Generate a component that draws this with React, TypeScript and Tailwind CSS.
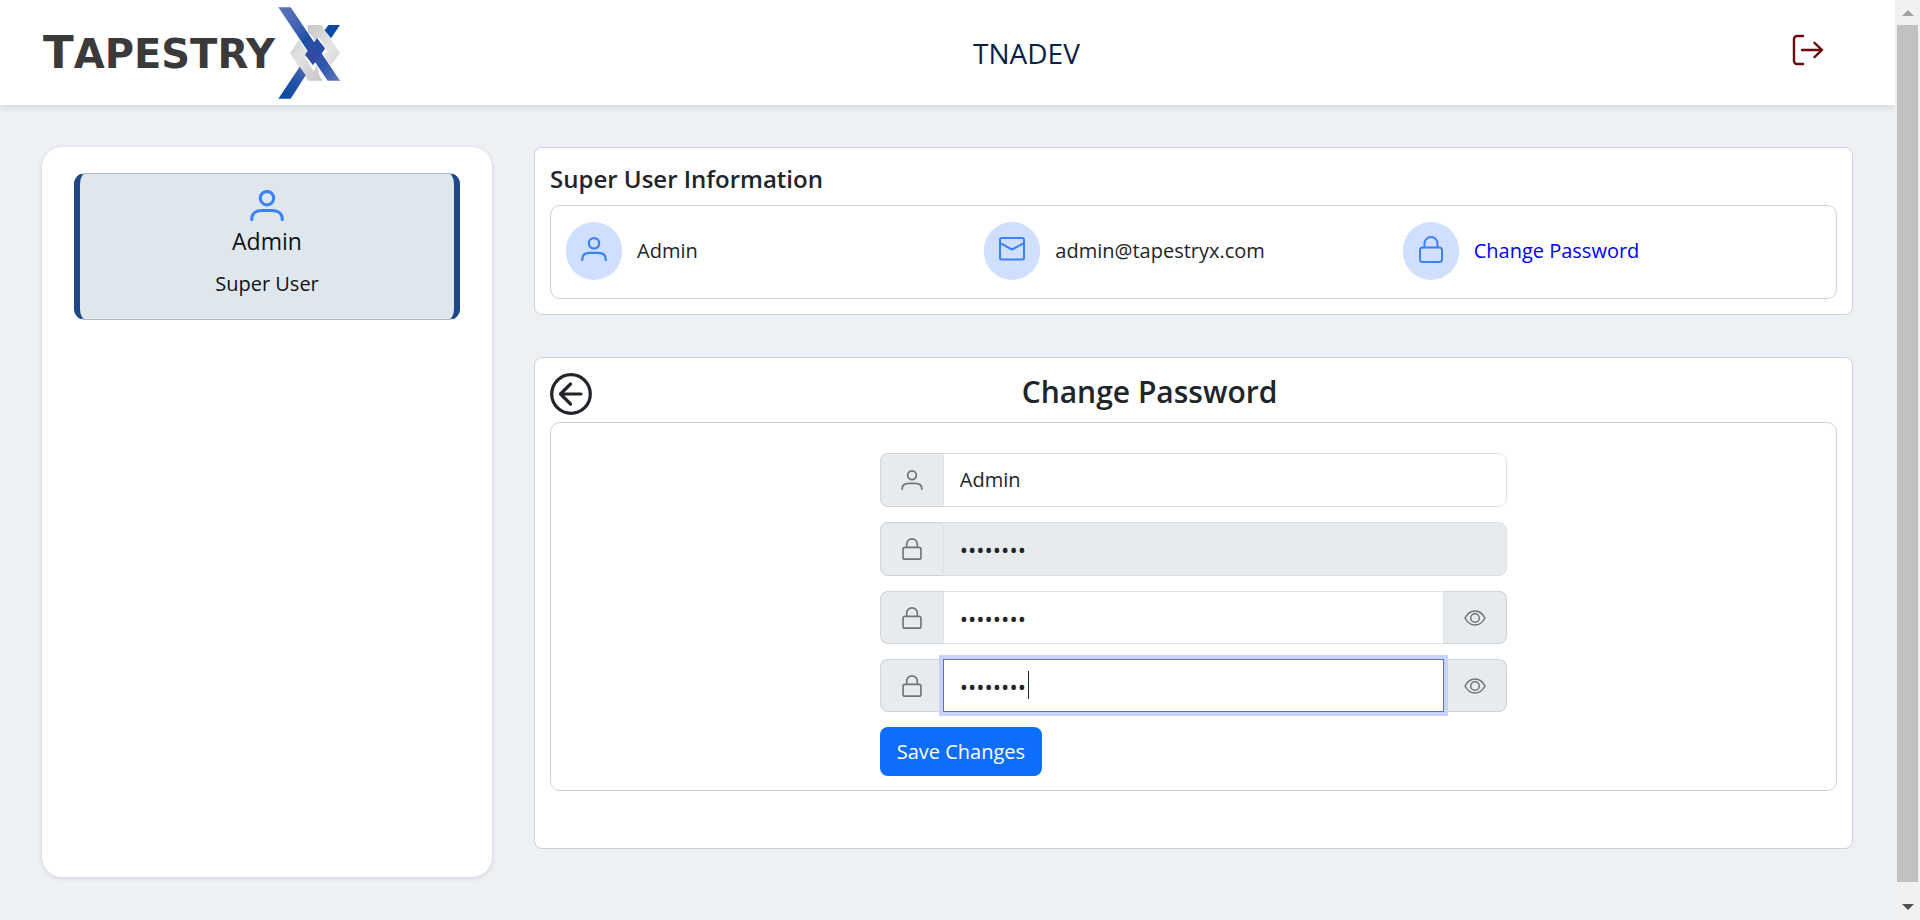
import { useState } from "react";
import type { ReactNode } from "react";

type IconProps = { className: string; weight: number };

function UserIcon({ className, weight }: IconProps) {
  return (
    <svg viewBox="0 0 26 24" fill="none" stroke="currentColor" strokeWidth={weight} strokeLinecap="round" className={className} aria-hidden="true">
      <circle cx="13" cy="6.3" r="5.2" />
      <path d="M1.2 23v-.6C1.2 17.6 5 15.9 9.2 15.9h7.6c4.2 0 8 1.7 8 6.5v.6" />
    </svg>
  );
}

function MailIcon({ className, weight }: IconProps) {
  return (
    <svg viewBox="0 0 26 24" fill="none" stroke="currentColor" strokeWidth={weight} strokeLinejoin="round" className={className} aria-hidden="true">
      <rect x="1" y="1" width="24" height="21.5" rx="1.5" />
      <path d="M1.2 6.2 13 12.5 24.8 6.2" />
    </svg>
  );
}

function LockIcon({ className, weight }: IconProps) {
  return (
    <svg viewBox="0 0 24 27" fill="none" stroke="currentColor" strokeWidth={weight} className={className} aria-hidden="true">
      <rect x="1" y="11.5" width="22" height="14.5" rx="2.5" />
      <path d="M5.5 11.5V7.5a6.5 6.5 0 0 1 13 0v4" />
    </svg>
  );
}

function EyeIcon({ className, weight }: IconProps) {
  return (
    <svg viewBox="0 0 22 16" fill="none" stroke="currentColor" strokeWidth={weight} className={className} aria-hidden="true">
      <path d="M1 8C3.5 3.2 7 1 11 1s7.500 2.200 10 7c-2.500 4.800-6 7-10 7S3.500 12.800 1 8Z" />
      <circle cx="11" cy="8" r="4.3" />
    </svg>
  );
}

function Logo() {
  return (
    <a href="#" aria-label="TapestryX" className="flex h-[105px] items-center text-[#3a3a3a] no-underline">
      <span className="font-['DejaVu_Sans',sans-serif] text-[40px] leading-none font-bold">
        <span className="text-[45px]">T</span>APESTRY
      </span>
      <svg viewBox="0 0 204 294" className="h-[98px] w-[68px] shrink-0" aria-hidden="true">
        <defs>
          <linearGradient id="strip" x1="0" y1="0" x2="1" y2="1">
            <stop offset="0" stopColor="#5b74b8" />
            <stop offset=".25" stopColor="#4a66b4" />
            <stop offset=".45" stopColor="#1a4fa6" />
            <stop offset=".6" stopColor="#3b4fa6" />
            <stop offset=".75" stopColor="#2a55ae" />
            <stop offset="1" stopColor="#6078ba" />
          </linearGradient>
          <linearGradient id="tail" x1="1" y1="0" x2="0" y2="1">
            <stop offset="0" stopColor="#5068b4" />
            <stop offset=".5" stopColor="#1e50a6" />
            <stop offset="1" stopColor="#0a4aa2" />
          </linearGradient>
          <linearGradient id="silverLeft" x1="0" y1="0" x2="1" y2="1">
            <stop offset="0" stopColor="#c9cbcc" />
            <stop offset=".35" stopColor="#e2e4e4" />
            <stop offset="1" stopColor="#c3c5c6" />
          </linearGradient>
          <linearGradient id="silverRight" x1="0" y1="0" x2="1" y2="1">
            <stop offset="0" stopColor="#c3c5c6" />
            <stop offset=".65" stopColor="#e4e6e7" />
            <stop offset="1" stopColor="#d2d4d5" />
          </linearGradient>
        </defs>
        <path d="M72 108 45 148 99 230h44l-9-14-8-32-10 18-26-42 14-8Z" fill="url(#silverLeft)" />
        <path d="M98 63h42l55 84-28 38-22-34 14-8-26-42-12 14-10-20-12-10Z" fill="url(#silverRight)" />
        <path d="M10 10h37l148 220h-37Z" fill="url(#strip)" />
        <path d="M90 152 126 103 150 133 114 184Z" fill="#3149a1" />
        <path d="m127 105 22 30-12 17-22-30Z" fill="#244fa8" />
        <path d="M160 63h35l-27 40-19-24Z" fill="#0b4aa3" />
        <path d="m74 188 18 26-45 70H10Z" fill="url(#tail)" />
      </svg>
    </a>
  );
}

function InfoItem({ icon, children }: { icon: ReactNode; children: ReactNode }) {
  return (
    <div className="flex items-center gap-[15px]">
      <span className="flex h-[58px] w-14 shrink-0 items-center justify-center rounded-full bg-[#d0dfff] pb-1 text-[#3b82f6]">
        {icon}
      </span>
      {children}
    </div>
  );
}

const addon = "flex w-[63px] shrink-0 items-center justify-center border border-[#ced4da] bg-[#e7ebee] text-[#6c757d]";
const field = "min-w-0 flex-1 border px-4 text-[#212529] outline-none";

function PasswordRow({ id, label, active }: { id: string; label: string; active?: boolean }) {
  const [value, setValue] = useState("password");
  const [shown, setShown] = useState(false);
  return (
    <div className="flex h-[53px]">
      <label htmlFor={id} aria-label={label} className={`${addon} rounded-l-lg border-r-0`}>
        <LockIcon weight={2} className="h-[22px] w-5" />
      </label>
      <div className="relative flex min-w-0 flex-1">
        <input
          id={id}
          type={shown ? "text" : "password"}
          value={value}
          onChange={(e) => setValue(e.target.value)}
          className={
            active
              ? `${field} z-10 border-[#6366f1] bg-white text-[22px] caret-transparent shadow-[0_0_0_4px_#c7d2fe]`
              : `${field} border-[#dee2e6] bg-white text-[22px]`
          }
        />
        {active && <span className="absolute top-3 left-[85px] z-20 h-7 w-px bg-[#212529]" aria-hidden="true" />}
      </div>
      <button type="button" aria-label="Toggle visibility" onClick={() => setShown(!shown)} className={`${addon} rounded-r-lg border-l-0`}>
        <EyeIcon weight={1.5} className="h-4 w-[22px]" />
      </button>
    </div>
  );
}

function ScrollRail() {
  return (
    <div className="flex w-[25px] shrink-0 flex-col items-center bg-[#f0f0f0]" aria-hidden="true">
      <div className="flex h-[25px] items-center justify-center">
        <svg viewBox="0 0 12 6" className="h-1.5 w-3">
          <path d="M6 0l6 6H0Z" fill="#a3a3a3" />
        </svg>
      </div>
      <div className="w-[21px] flex-1 bg-[#c1c1c1]" />
      <div className="flex h-[38px] items-center justify-center pt-3">
        <svg viewBox="0 0 12 6" className="h-1.5 w-3">
          <path d="M0 0h12L6 6Z" fill="#505050" />
        </svg>
      </div>
    </div>
  );
}

export default function App() {
  return (
    <div className="flex min-h-screen bg-[#edf1f6] font-['Open_Sans','Noto_Sans',sans-serif] text-[20px] leading-[30px] text-[#212529]">
      <div className="min-w-0 flex-1">
        <header className="grid h-[105px] grid-cols-12 items-center bg-white shadow-[0_2px_8px_rgba(0,0,0,0.12)]">
          <div className="col-span-3 pl-[43px]">
            <Logo />
          </div>
          <h1 className="col-span-7 text-center text-[28px] leading-9 text-[#0b1f44]">TNADEV</h1>
          <div className="col-span-2 flex justify-end pr-[71px] pb-1.5">
            <button type="button" aria-label="Sign out" className="text-[#6b0a0d]">
              <svg viewBox="0 0 32 32" className="size-8" fill="none" stroke="currentColor" strokeWidth="2.4" strokeLinecap="round" strokeLinejoin="round" aria-hidden="true">
                <path d="M11 2H5a3 3 0 0 0-3 3v22a3 3 0 0 0 3 3h6M10 16h20M22.500 8.800 30 16l-7.500 7.200" />
              </svg>
            </button>
          </div>
        </header>

        <main className="grid grid-cols-[450fr_1319fr] items-start gap-[42px] px-[42px] pt-[42px] pb-10">
          <aside className="min-h-[730px] rounded-[20px] bg-white px-8 py-[26px] shadow-[0_1px_5px_rgba(0,0,0,0.14)]">
            <div className="flex flex-col items-center rounded-[11px] border-x-[6px] border-y border-x-[#1d4786] border-y-[#b0b9c0] bg-[#dfe7ee] pt-4 pb-5 text-[#111]">
              <UserIcon weight={2.4} className="h-[31px] w-[34px] text-[#3b82f6]" />
              <p className="mt-[3px] text-[23px] leading-[34px]">Admin</p>
              <p className="mt-[11px]">Super User</p>
            </div>
          </aside>

          <div className="flex min-w-0 flex-col gap-[42px]">
            <section className="rounded-lg border border-[#cfd1d3] bg-white p-[15px]">
              <h2 className="mb-2.5 text-[24px] leading-8 font-semibold">Super User Information</h2>
              <div className="grid grid-cols-3 rounded-[10px] border border-[#cfd1d3] px-[15px] pt-4 pb-[18px]">
                <InfoItem icon={<UserIcon weight={2.2} className="h-6 w-[26px]" />}>Admin</InfoItem>
                <InfoItem icon={<MailIcon weight={2} className="h-6 w-[26px]" />}>admin@tapestryx.com</InfoItem>
                <InfoItem icon={<LockIcon weight={2} className="h-[27px] w-6" />}>
                  <a href="#change-password" className="text-[#0000ff]">
                    Change Password
                  </a>
                </InfoItem>
              </div>
            </section>

            <section id="change-password" className="rounded-lg border border-[#cfd1d3] bg-white px-[15px] pt-[15px] pb-[57px]">
              <div className="mb-2 flex h-[41px] items-start">
                <button type="button" aria-label="Back">
                  <svg viewBox="0 0 42 42" className="size-[42px]" fill="none" stroke="currentColor" strokeWidth="3.2" strokeLinecap="round" strokeLinejoin="round" aria-hidden="true">
                    <circle cx="21" cy="21" r="19.3" />
                    <path d="M31 21H11M20.500 11 10.500 21l10 10" />
                  </svg>
                </button>
                <h2 className="flex-1 pr-[130px] text-center text-[30px] leading-[38px] font-semibold">Change Password</h2>
              </div>
              <div className="rounded-[10px] border border-[#cfd1d3] px-[15px] pt-[30px] pb-[14px]">
                <form className="mx-auto flex w-1/2 flex-col gap-[15px]" onSubmit={(e) => e.preventDefault()}>
                  <div className="flex h-[54px]">
                    <label htmlFor="username" aria-label="User name" className={`${addon} rounded-l-lg border-r-0`}>
                      <UserIcon weight={2.1} className="h-5 w-[22px]" />
                    </label>
                    <input id="username" type="text" defaultValue="Admin" className={`${field} rounded-r-lg border-[#dee2e6] bg-white text-[20px]`} />
                  </div>
                  <div className="flex h-[54px]">
                    <label htmlFor="current" aria-label="Current password" className={`${addon} rounded-l-lg border-r-0`}>
                      <LockIcon weight={2} className="h-[22px] w-5" />
                    </label>
                    <input id="current" type="password" defaultValue="password" disabled className={`${field} rounded-r-lg border-[#dee2e6] bg-[#e7ebee] text-[22px]`} />
                  </div>
                  <PasswordRow id="new-password" label="New password" />
                  <PasswordRow id="confirm-password" label="Confirm password" active />
                  <button type="submit" className="h-[49px] self-start rounded-lg bg-[#0d6efd] px-[17px] text-[20px] text-white">
                    Save Changes
                  </button>
                </form>
              </div>
            </section>
          </div>
        </main>
      </div>
      <ScrollRail />
    </div>
  );
}
